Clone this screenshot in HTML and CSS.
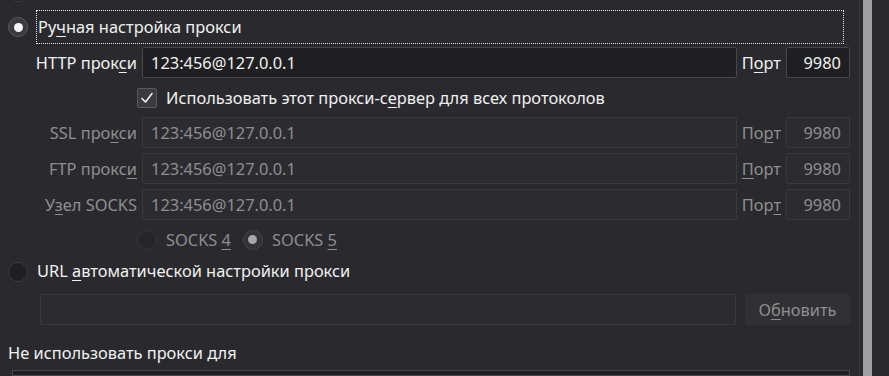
FILE: index.html
```html
<!DOCTYPE html>
<html lang="ru">
<head>
<meta charset="utf-8">
<link rel="stylesheet" href="styles.css">
</head>
<body>
<div class="window">
  <div class="content">
    <div class="radio-row clipped">
      <span class="radio"></span>
      <span class="radio-label">Испо<u>л</u>ьзовать системные настройки прокси</span>
    </div>
    <div class="radio-row">
      <span class="radio checked"></span>
      <span class="radio-label focus">Ру<u>ч</u>ная настройка прокси</span>
    </div>
    <div class="proxy-grid">
      <label class="lbl">HTTP прок<u>с</u>и</label>
      <div class="field active">123:456@127.0.0.1</div>
      <label class="lbl port-lbl">П<u>о</u>рт</label>
      <div class="field active port">9980</div>

      <div class="check-row">
        <span class="checkbox"><svg width="14" height="14" viewBox="0 0 14 14"><path d="M2 7.5 L5.5 11 L12 2.5" fill="none" stroke="#f2f2f2" stroke-width="1.6" stroke-linecap="round" stroke-linejoin="round"/></svg></span>
        <span class="check-label">Использовать этот прокси-с<u>е</u>рвер для всех протоколов</span>
      </div>

      <label class="lbl dis">SSL про<u>к</u>си</label>
      <div class="field">123:456@127.0.0.1</div>
      <label class="lbl port-lbl dis">По<u>р</u>т</label>
      <div class="field port">9980</div>

      <label class="lbl dis">FTP прокс<u>и</u></label>
      <div class="field">123:456@127.0.0.1</div>
      <label class="lbl port-lbl dis"><u>П</u>орт</label>
      <div class="field port">9980</div>

      <label class="lbl dis">У<u>з</u>ел SOCKS</label>
      <div class="field">123:456@127.0.0.1</div>
      <label class="lbl port-lbl dis">Пор<u>т</u></label>
      <div class="field port">9980</div>

      <div class="socks-row">
        <span class="radio dis"></span>
        <span class="socks-label">SOCKS <u>4</u></span>
        <span class="radio dis checked-dis"></span>
        <span class="socks-label">SOCKS <u>5</u></span>
      </div>
    </div>
    <div class="radio-row url-radio">
      <span class="radio"></span>
      <span class="radio-label">URL <u>а</u>втоматической настройки прокси</span>
    </div>
    <div class="url-row">
      <div class="field"></div>
      <div class="button">О<u>б</u>новить</div>
    </div>
    <div class="noproxy">Не использовать прокси для</div>
    <div class="textarea"></div>
  </div>
  <div class="sep"></div>
  <div class="scroll"><div class="thumb"></div></div>
</div>
</body>
</html>
```

FILE: styles.css
```css
* { box-sizing: border-box; }
html, body {
  margin: 0;
  padding: 0;
  background: #2a2a2e;
  overflow: hidden;
}
body {
  font-family: "Noto Sans", "Open Sans", sans-serif;
  font-size: 16.4px;
  color: #f0f0f0;
  width: 889px;
  height: 376px;
}
u {
  text-decoration-thickness: 1px;
  text-underline-offset: 3px;
}
.window {
  display: flex;
  height: 376px;
  overflow: hidden;
}
.content {
  width: 859px;
  padding-left: 8px;
  padding-right: 9px;
  display: flex;
  flex-direction: column;
}
.radio-row {
  display: flex;
  align-items: center;
  height: 34px;
  gap: 8px;
  margin-top: 1px;
}
.radio-row.clipped {
  margin-top: -25px;
}
.radio-row.clipped .radio-label {
  line-height: 22px;
}
.radio {
  width: 20px;
  height: 20px;
  border-radius: 50%;
  background: #1f1f22;
  border: 1px solid #3c3c41;
  flex: none;
  display: flex;
  align-items: center;
  justify-content: center;
}
.radio.checked {
  background: #3a3a3f;
  border-color: #58585d;
}
.radio.checked::after {
  content: "";
  width: 9px;
  height: 9px;
  border-radius: 50%;
  background: #f4f4f4;
}
.radio.dis {
  background: #26262a;
  border-color: #36363a;
}
.radio.checked-dis {
  background: #333337;
  border-color: #444448;
}
.radio.checked-dis::after {
  content: "";
  width: 9px;
  height: 9px;
  border-radius: 50%;
  background: #a8a8a8;
}
.radio-label {
  height: 34px;
  line-height: 32px;
  padding-left: 1px;
  white-space: nowrap;
}
.radio-label.focus {
  flex: 1;
  margin-right: 6px;
  border: 1px dotted #e6e6e6;
}
.proxy-grid {
  display: grid;
  grid-template-columns: 128px 1fr auto 64px;
  column-gap: 5px;
  row-gap: 5px;
  margin-top: 3px;
}
.lbl {
  text-align: right;
  line-height: 31px;
  white-space: nowrap;
}
.lbl:not(.port-lbl) { margin-right: -1px; }
.lbl.dis { color: #8e8e90; }
.field {
  height: 31px;
  line-height: 29px;
  padding: 0 8px;
  background: #2c2c30;
  border: 1px solid #3a3a3e;
  border-radius: 2px;
  color: #8e8e90;
  white-space: nowrap;
}
.lbl:not(.port-lbl) + .field { margin-left: 1px; }
.field.active {
  background: #1f1f22;
  border-color: #48484c;
  color: #f0f0f0;
}
.field.port {
  text-align: right;
  padding-right: 8px;
}
.check-row {
  grid-column: 2 / 5;
  display: flex;
  align-items: center;
  height: 29px;
  margin-left: -4px;
  gap: 9px;
}
.checkbox {
  width: 20px;
  height: 20px;
  border: 1px solid #5a5a5e;
  background: #3a3a3f;
  border-radius: 2px;
  display: flex;
  align-items: center;
  justify-content: center;
}
.socks-row {
  grid-column: 2 / 5;
  display: flex;
  align-items: center;
  height: 29px;
  margin-left: -4px;
}
.socks-label {
  color: #8e8e90;
  margin-left: 9px;
  margin-right: 12px;
}
.url-radio { margin-top: 1px; }
.url-row {
  display: flex;
  gap: 9px;
  margin-top: 5px;
  padding-left: 32px;
}
.url-row .field { flex: 1; }
.button {
  width: 105px;
  height: 31px;
  line-height: 31px;
  text-align: center;
  background: #313135;
  border-radius: 2px;
  color: #8e8e90;
}
.noproxy {
  margin-top: 17px;
  line-height: 22px;
}
.textarea {
  margin-top: 6px;
  margin-left: 4px;
  height: 40px;
  background: #1f1f22;
  border: 1px solid #48484c;
}
.sep {
  width: 1px;
  background: #3c3c40;
}
.scroll {
  width: 29px;
  padding-left: 3px;
}
.thumb {
  width: 9px;
  height: 100%;
  background: #a0a0a0;
}
```
